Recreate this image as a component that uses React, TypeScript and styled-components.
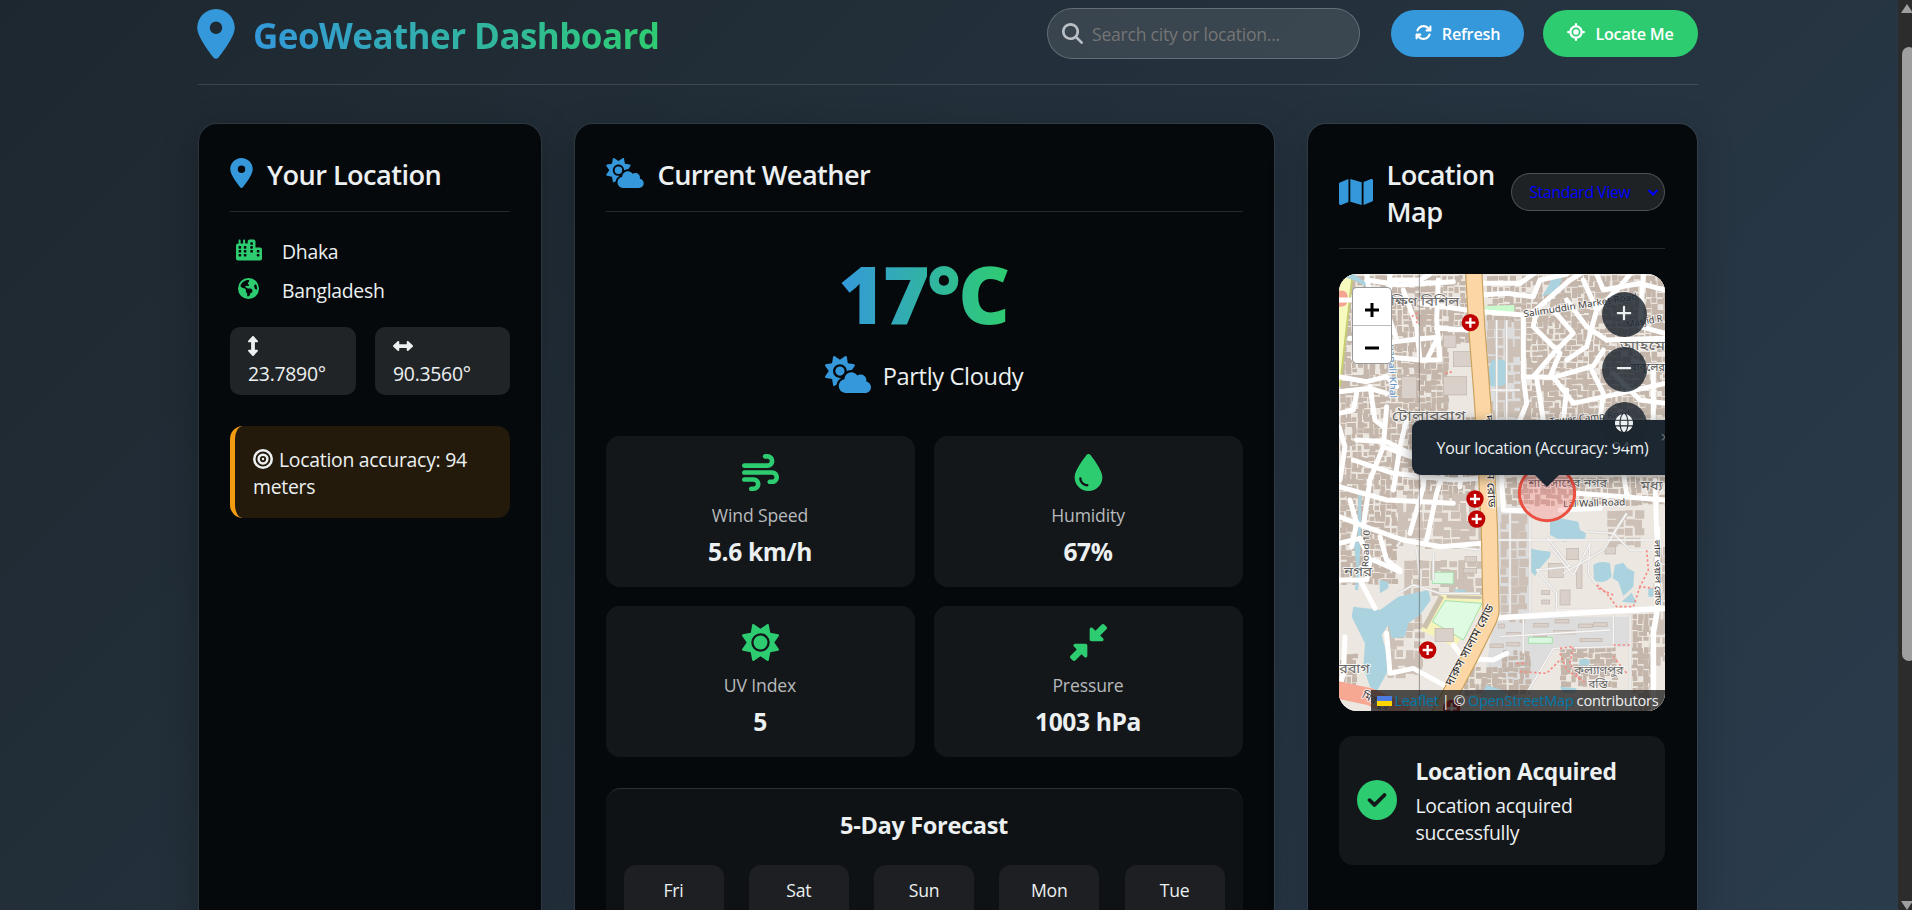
import React from "react";
import styled, { createGlobalStyle, css } from "styled-components";
import {
  FaLocationDot,
  FaMagnifyingGlass,
  FaArrowsRotate,
  FaLocationCrosshairs,
  FaCloudSun,
  FaMap,
  FaCity,
  FaEarthAmericas,
  FaUpDown,
  FaLeftRight,
  FaBullseye,
  FaWind,
  FaDroplet,
  FaSun,
  FaDownLeftAndUpRightToCenter,
  FaCircleCheck,
  FaPlus,
  FaMinus,
  FaGlobe,
} from "react-icons/fa6";

const BLUE = "#3498db";
const GREEN = "#2ecc71";
const LIGHT = "#ecf0f1";

const GlobalStyle = createGlobalStyle`
  * { box-sizing: border-box; letter-spacing: -0.014em; }
  html, body { margin: 0; padding: 0; overflow: hidden; }
  body {
    font-family: "Open Sans", "Noto Sans", sans-serif;
    font-size: 19.4px;
    line-height: 27px;
    color: ${LIGHT};
  }
  h1, h2, h3, p { margin: 0; }
  svg { display: block; flex: none; }
`;

const Screen = styled.div`
  display: flex;
  height: 910px;
  overflow: hidden;
`;

const Page = styled.div`
  flex: 1;
  min-width: 0;
  padding: 8px 200px 0 198px;
  background: linear-gradient(135deg, #1e272e, #2c3e50) 0 -44px / 1898px 1296px no-repeat;
`;

const Scrollbar = styled.div`
  width: 14px;
  flex: none;
  background: #2c2c2c;
  display: flex;
  flex-direction: column;
  padding: 4px 0 0 3px;
  overflow: hidden;
`;

const Arrow = styled.div<{ $down?: boolean }>`
  width: 0;
  height: 0;
  border: 6px solid transparent;
  ${(p) =>
    p.$down
      ? css`
          border-top: 9px solid #9f9f9f;
          border-bottom: 0;
        `
      : css`
          border-bottom: 9px solid #9f9f9f;
          border-top: 0;
        `}
`;

const Thumb = styled.div`
  width: 14px;
  height: 616px;
  margin: 34px 0 240px 1px;
  border-radius: 7px;
  background: #9f9f9f;
`;

const Header = styled.header`
  width: 1500px;
  height: 77px;
  display: flex;
  align-items: flex-start;
  justify-content: space-between;
  border-bottom: 1px solid rgba(255, 255, 255, 0.12);
`;

const Brand = styled.div`
  display: flex;
  align-items: center;
  height: 51px;
  gap: 18px;
  svg {
    color: ${BLUE};
    margin-left: -1px;
  }
`;

const gradientText = css`
  background: linear-gradient(90deg, ${BLUE}, ${GREEN});
  -webkit-background-clip: text;
  background-clip: text;
  color: transparent;
`;

const BrandTitle = styled.h1`
  font-size: 35px;
  line-height: 50px;
  font-weight: 700;
  padding-top: 5px;
  letter-spacing: -0.016em;
  ${gradientText}
`;

const Actions = styled.div`
  display: flex;
  align-items: center;
`;

const SearchBox = styled.label`
  width: 313px;
  height: 51px;
  margin-right: 31px;
  padding: 1px 14px 0;
  display: flex;
  align-items: center;
  gap: 9px;
  border: 1px solid rgba(255, 255, 255, 0.22);
  border-radius: 26px;
  background: rgba(255, 255, 255, 0.1);
  svg {
    color: #b9bfc4;
    margin-top: -2px;
  }
`;

const SearchInput = styled.input`
  flex: 1;
  min-width: 0;
  border: 0;
  padding: 1px 0 0;
  outline: 0;
  background: none;
  font: inherit;
  font-size: 17.6px;
  color: ${LIGHT};
  &::placeholder {
    color: #757575;
    opacity: 1;
  }
`;

const PillButton = styled.button<{ $color: string; $width: number }>`
  width: ${(p) => p.$width}px;
  height: 47px;
  margin-right: 19px;
  padding: 2px 0 0;
  display: flex;
  align-items: center;
  justify-content: center;
  gap: 10px;
  border: 0;
  border-radius: 24px;
  background: ${(p) => p.$color};
  color: #fff;
  font: inherit;
  font-size: 16.2px;
  font-weight: 600;
  &:last-child {
    margin-right: 0;
  }
  svg {
    margin-top: -5px;
  }
`;

const Columns = styled.main`
  display: grid;
  grid-template-columns: 343.5px 701px 391px;
  gap: 32px;
  padding-top: 38px;
`;

const Card = styled.section`
  height: 900px;
  padding: 31px;
  border: 1px solid rgba(255, 255, 255, 0.07);
  border-radius: 19px;
  background: #06090c padding-box;
  box-shadow: 0 10px 38px rgba(0, 0, 0, 0.22);
  &:last-child {
    padding-right: 32px;
  }
`;

const CardHeader = styled.div<{ $height?: number }>`
  display: flex;
  align-items: center;
  gap: 14px;
  height: ${(p) => p.$height ?? 57}px;
  padding-bottom: 20px;
  border-bottom: 1px solid rgba(255, 255, 255, 0.13);
  > svg {
    color: ${BLUE};
  }
`;

const CardTitle = styled.h2`
  font-size: 27.2px;
  line-height: 37px;
  font-weight: 600;
  letter-spacing: -0.021em;
  padding-top: 3px;
`;

const PlaceRow = styled.div`
  display: flex;
  align-items: center;
  height: 27px;
  margin-bottom: 12px;
`;

const PlaceIcon = styled.span`
  width: 37px;
  margin: -4px 15px 0 0;
  display: flex;
  justify-content: center;
  color: ${GREEN};
`;

const Places = styled.div`
  padding-top: 26px;
`;

const Coords = styled.div`
  display: grid;
  grid-template-columns: 126px 135px;
  gap: 19px;
  margin-top: 23px;
`;

const Coord = styled.div`
  height: 68px;
  padding: 7px 18px;
  border-radius: 10px;
  background: rgba(255, 255, 255, 0.11);
  svg {
    margin: 2px 0 4px;
  }
`;

const Accuracy = styled.div`
  margin-top: 31px;
  height: 92px;
  padding: 20px 18px;
  border-left: 5px solid #f39c12;
  border-radius: 13px;
  background: rgba(243, 156, 18, 0.12);
  svg {
    display: inline-block;
    vertical-align: -2px;
    margin-right: 6px;
  }
`;

const Current = styled.div`
  display: flex;
  flex-direction: column;
  align-items: center;
  padding-top: 33px;
`;

const Temperature = styled.div`
  font-size: 80px;
  line-height: 96px;
  font-weight: 800;
  letter-spacing: -0.031em;
  margin-left: -2px;
  ${gradientText}
`;

const Condition = styled.div`
  display: flex;
  align-items: center;
  gap: 12px;
  margin-top: 14px;
  height: 42px;
  font-size: 23.6px;
  svg {
    color: ${BLUE};
    margin-top: -4px;
  }
`;

const Metrics = styled.div`
  display: grid;
  grid-template-columns: 1fr 1fr;
  gap: 19px;
  margin-top: 39px;
`;

const Metric = styled.div`
  height: 151px;
  padding-top: 18px;
  border-radius: 14px;
  background: rgba(255, 255, 255, 0.06);
  display: flex;
  flex-direction: column;
  align-items: center;
  svg {
    color: ${GREEN};
  }
`;

const MetricLabel = styled.div`
  margin-top: 12px;
  font-size: 17.6px;
  line-height: 25px;
  letter-spacing: -0.008em;
  color: #b7babc;
`;

const MetricValue = styled.div`
  margin-top: 7px;
  font-size: 24.6px;
  line-height: 34px;
  font-weight: 700;
  letter-spacing: -0.016em;
`;

const Forecast = styled.div`
  margin-top: 31px;
  height: 240px;
  padding: 17px 18px 0;
  border-top: 1px solid rgba(255, 255, 255, 0.13);
  border-radius: 15px;
  background: rgba(255, 255, 255, 0.04);
`;

const ForecastTitle = styled.h3`
  font-size: 23.6px;
  line-height: 38px;
  font-weight: 700;
  text-align: center;
  letter-spacing: -0.015em;
`;

const Days = styled.div`
  display: grid;
  grid-template-columns: repeat(5, 100px);
  justify-content: space-between;
  margin-top: 21px;
`;

const Day = styled.div`
  height: 150px;
  padding-top: 13px;
  border-radius: 12px;
  background: rgba(255, 255, 255, 0.06);
  font-size: 17.6px;
  line-height: 25px;
  text-align: center;
`;

const ViewSelect = styled.div`
  flex: none;
  width: 154px;
  height: 38px;
  margin-left: auto;
  padding: 1px 5px 0 18px;
  display: flex;
  align-items: center;
  justify-content: space-between;
  border: 1px solid rgba(255, 255, 255, 0.22);
  border-radius: 19px;
  background: rgba(255, 255, 255, 0.1);
  color: #0000ff;
  font-size: 15.8px;
  letter-spacing: -0.025em;
  white-space: nowrap;
`;

const MapFrame = styled.div`
  position: relative;
  width: 326px;
  height: 437px;
  margin-top: 25px;
  border-radius: 18px;
  overflow: hidden;
  background: #f2efe9;
`;

const ZoomControl = styled.div`
  position: absolute;
  left: 13px;
  top: 13px;
  width: 40px;
  border: 1px solid rgba(0, 0, 0, 0.4);
  border-radius: 5px;
  overflow: hidden;
  background: #fff;
  color: #000;
`;

const ZoomKey = styled.div`
  height: 37.5px;
  display: flex;
  align-items: center;
  justify-content: center;
  padding: 7px 0 0 1px;
  &:first-child {
    border-bottom: 1px solid #bbb;
  }
`;

const RoundControls = styled.div`
  position: absolute;
  left: 263px;
  top: 18px;
  display: flex;
  flex-direction: column;
  gap: 10px;
`;

const RoundButton = styled.div`
  width: 45px;
  height: 45px;
  border-radius: 50%;
  display: flex;
  align-items: center;
  justify-content: center;
  padding: 0 1px 3px 0;
  background: rgba(28, 38, 47, 0.82);
  color: ${LIGHT};
`;

const Popup = styled.div`
  position: absolute;
  left: 73px;
  top: 146px;
  width: 270px;
  height: 55px;
  padding: 2px 0 0 25px;
  display: flex;
  align-items: center;
  border-radius: 9px;
  background: #1c2731;
  font-size: 15.9px;
  white-space: nowrap;
  box-shadow: 0 3px 14px rgba(0, 0, 0, 0.4);
`;

const PopupTip = styled.div`
  position: absolute;
  left: 195px;
  top: 200px;
  border: 13px solid transparent;
  border-top-color: #1c2731;
  border-bottom: 0;
`;

const PopupClose = styled.span`
  position: absolute;
  left: 249px;
  top: 4px;
  font-size: 16px;
  color: #757575;
`;

const Attribution = styled.div`
  position: absolute;
  right: 0;
  bottom: 0;
  width: 294px;
  height: 21px;
  padding: 0 6px 0 6px;
  display: flex;
  align-items: center;
  justify-content: space-between;
  background: rgba(28, 28, 28, 0.76);
  font-size: 14.6px;
  line-height: 21px;
  white-space: nowrap;
  a {
    color: #0078a8;
  }
`;

const Status = styled.div`
  margin-top: 25px;
  height: 129px;
  padding: 0 18px;
  display: flex;
  align-items: center;
  gap: 19px;
  border-radius: 14px;
  background: rgba(255, 255, 255, 0.06);
  svg {
    color: ${GREEN};
    margin-top: -2px;
  }
`;

const StatusTitle = styled.h3`
  font-size: 22.8px;
  line-height: 31px;
  font-weight: 700;
  letter-spacing: -0.014em;
  margin: 0 0 5px;
`;

/* ---- street map drawing ---- */

type Area = [number, number, number, number];

// Small footprints scattered over the densely built blocks, from a fixed seed.
function footprints(areas: Area[], step: number) {
  let seed = 7;
  const rnd = () => {
    seed = (seed * 16807) % 2147483647;
    return seed / 2147483647;
  };
  let d = "";
  areas.forEach(([x0, y0, x1, y1]) => {
    for (let y = y0; y < y1; y += step) {
      for (let x = x0; x < x1; x += step) {
        if (rnd() < 0.06) continue;
        const w = Math.round(step * (0.65 + rnd() * 0.5));
        const h = Math.round(step * (0.65 + rnd() * 0.5));
        d += `M${Math.round(x + rnd() * 4)} ${Math.round(y + rnd() * 4)}h${w}v${h}h${-w}z`;
      }
    }
  });
  return d;
}

const dense = footprints(
  [
    [60, 45, 450, 240],
    [60, 240, 370, 470],
    [60, 470, 465, 700],
    [500, 45, 1035, 170],
    [600, 170, 1035, 480],
    [540, 650, 1035, 720],
    [60, 700, 230, 960],
    [545, 1170, 630, 1290],
    [935, 1060, 1000, 1350],
    [430, 1220, 540, 1290],
    [60, 1180, 110, 1290],
    [720, 1160, 880, 1270],
  ],
  17
);
const sparse = footprints(
  [
    [230, 700, 480, 850],
    [250, 900, 480, 985],
    [540, 760, 620, 1060],
    [200, 1060, 290, 1230],
    [500, 180, 600, 480],
    [1000, 860, 1035, 1200],
    [860, 750, 960, 850],
  ],
  27
);

const wideRoads = [
  "M57 120H200L215 60H300L330 42",
  "M140 60L240 75L400 65",
  "M140 42L150 110",
  "M210 42L200 150L230 240",
  "M250 90L290 200L300 300",
  "M355 60L350 180L360 300L300 300L200 290L100 295",
  "M300 130L440 150",
  "M90 235L220 245L350 232",
  "M350 205L450 210",
  "M320 300L355 230",
  "M57 350L140 365L200 350L230 380",
  "M57 395L150 385L200 400",
  "M150 380L165 480L190 500",
  "M57 460L100 450L110 400",
  "M57 500L75 560L60 660",
  "M110 540L200 545L290 590",
  "M200 440L190 560L150 660L130 800",
  "M190 560L300 600L420 610L490 600",
  "M260 480L240 560L220 690",
  "M300 480L320 560L310 680L270 820",
  "M370 480L380 600L350 700L320 840",
  "M430 480L420 680",
  "M100 600L220 640L400 660L480 655",
  "M57 770L150 805L250 840L360 860L485 850",
  "M57 680L200 720L400 730",
  "M90 720L110 790L95 860",
  "M57 850L120 835L150 900L140 960L57 960",
  "M180 830L200 900L240 930",
  "M120 960L165 1045",
  "M160 900L240 935",
  "M75 1130L70 1240L57 1290",
  "M200 1120L210 1240L280 1225L380 1280",
  "M400 1155L430 1195L520 1200L560 1180",
  "M490 155L610 165",
  "M485 70L600 70L640 42",
  "M485 105L560 100L640 110L660 60L740 42",
  "M610 165L610 350L700 352L820 318L850 270",
  "M635 160L750 60L780 42",
  "M650 150L640 200L720 280L690 350",
  "M700 150L760 220L700 280L640 350",
  "M740 120L800 200L860 240",
  "M790 60L830 150L900 80L930 42",
  "M830 150L800 260L740 300",
  "M830 42L850 90L960 70L1035 90",
  "M970 42L960 200L1035 220",
  "M860 240L1035 235",
  "M610 350L620 430L600 480",
  "M650 355L670 480",
  "M700 352L760 430L900 400L1035 370",
  "M740 390L730 480",
  "M810 320L850 400L840 480",
  "M880 340L960 420L1035 430",
  "M940 300L1000 330L1000 480",
  "M545 650L550 750L620 752",
  "M770 700L840 705L1035 720",
  "M910 640L920 700",
  "M1005 660L1010 820",
  "M720 750L840 745",
];

const thinRoads = [
  "M530 840H1000",
  "M570 750V1060",
  "M630 760V1060",
  "M680 830L750 920L650 930L710 1000V1050",
  "M690 860L760 945L810 850",
  "M800 815L880 820L920 760",
  "M880 820L930 870H1000",
  "M920 760L850 870L730 940",
  "M810 850L805 940L850 1000",
  "M710 1050H1000",
  "M610 1070V1180",
  "M880 1060V1160L700 1165L620 1300",
  "M930 1060V1350",
  "M540 1130L870 1110",
  "M230 860L245 840L480 870",
  "M235 1000L280 975L360 1000L480 1000",
  "M340 880V960",
  "M290 870L300 960",
  "M530 180V480",
  "M560 180V480",
  "M500 390H600",
];

const waterways = [
  "M57 45L100 42L150 75L140 80L105 62z",
  "M700 42L725 42Q728 70 705 95L665 110Q690 75 700 42z",
  "M515 302Q540 292 560 305L564 370Q540 385 512 378L506 330z",
  "M690 780L720 775L775 785L780 810L798 820L795 838L730 845L690 825z",
  "M630 865L650 870L692 875L690 890L655 930L645 948L628 930z",
  "M820 915Q840 900 870 910L875 950Q850 975 822 960z",
  "M885 915L910 908L922 925L943 935L940 980L910 1008L895 965L878 955z",
  "M905 1025L935 998L950 1030z",
  "M985 985L1000 985V1010L985 1010z",
  "M100 1040L180 1050L235 1010L280 1000L325 990L332 1020L300 1065L265 1090L255 1130L215 1135L205 1095L185 1125L205 1200L200 1240L170 1295L150 1280L130 1220L135 1150L95 1070z",
  "M178 960L205 965L205 985L180 1000z",
  "M395 988L440 990L425 1003z",
  "M500 1275L560 1295L550 1320L480 1310z",
  "M720 1280L770 1285L765 1300L730 1300z",
  "M778 1198h30v18h-30z",
];

const trackDots = [
  "M980 870L985 930L960 980L1000 985",
  "M830 975L860 1000L890 1040L940 1040L960 980",
  "M835 985L880 1005",
  "M720 1165L760 1160L750 1210L780 1260",
  "M720 1180L740 1230L800 1270",
  "M600 1235L680 1240L720 1200",
  "M590 1210H620",
  "M880 1155H930",
  "M880 1190L920 1240",
  "M275 170L290 160L290 190",
  "M375 340L400 335",
];

const hospitals: [number, number][] = [
  [451, 188],
  [465, 717],
  [470, 777],
  [323, 1170],
  [395, 1345],
];

const blocks: Area[] = [
  [245, 350, 45, 65],
  [370, 225, 38, 38],
  [400, 275, 55, 45],
  [370, 350, 70, 55],
  [740, 865, 36, 34],
  [685, 910, 45, 42],
  [855, 860, 32, 22],
  [720, 990, 30, 45],
  [770, 915, 16, 70],
  [665, 992, 24, 12],
  [665, 1020, 24, 12],
  [535, 1092, 18, 12],
  [345, 1105, 55, 40],
];

const bars: Area[] = [
  [640, 1090, 45, 11],
  [705, 1078, 42, 11],
  [775, 1092, 42, 11],
  [820, 1088, 42, 11],
  [560, 1118, 42, 10],
  [640, 1120, 40, 10],
  [700, 1112, 66, 10],
  [780, 1135, 66, 10],
  [510, 1152, 40, 10],
  [560, 1148, 40, 10],
  [435, 890, 35, 16],
  [430, 925, 40, 14],
];

const LabelText = styled.text<{ $tone?: string }>`
  fill: ${(p) => p.$tone ?? "#6a6a68"};
  font-family: "Noto Sans Bengali", "Noto Sans", "Open Sans", sans-serif;
  letter-spacing: 0;
  stroke: rgba(255, 255, 255, 0.75);
  stroke-width: 6px;
  stroke-linejoin: round;
  paint-order: stroke;
`;

type LabelProps = React.SVGProps<SVGTextElement> & { $tone?: string };

function MapLabel({ ref: _ref, ...props }: LabelProps) {
  return <LabelText lengthAdjust="spacingAndGlyphs" {...props} />;
}

const mainRoad = "M461 30L470 200L488 430L500 640L508 800L513 1050Q512 1070 500 1090L445 1200L350 1380";

function StreetMap() {
  return (
    <svg width="326" height="437" viewBox="57 42 978 1311">
      <rect x="57" y="42" width="978" height="1311" fill="#ece7e0" />
      <path d="M490 170H605V480H500zM530 740H630V1070H525zM520 1070H930V1160H700L620 1300L500 1220z" fill="#dedddd" />
      <path d={dense} fill="#c4b6ab" />
      <path d={sparse} fill="#cdc1b7" />
      <path d="M57 42H98L60 380H57z" fill="#f6fabe" />
      <path d="M98 42L60 380" stroke="#c5cc72" strokeWidth="6" fill="none" />
      <path d="M57 92Q84 88 84 116Q84 142 57 140z" fill="#f5a493" />
      <path d="M495 138L583 135V160L495 152z" fill="#c8facc" />
      {waterways.map((d) => (
        <path key={d} d={d} fill="#aad3df" />
      ))}
      <path d="M120 690L118 830L110 990M105 840L118 960" stroke="#aad3df" strokeWidth="9" fill="none" />
      <g fill="#dcf7e0" stroke="#a5dfae" strokeWidth="3">
        <path d="M337 937H400V972L337 970z" />
        <path d="M625 1132H697V1150H625z" />
      </g>
      <path d="M362 998L488 1005V1040L405 1162L302 1110z" fill="#f7f4bb" />
      <path d="M375 1022L486 1030L430 1140L337 1085z" fill="#dffbe2" stroke="#a5dfae" strokeWidth="3" />
      <path d="M358 1005L372 1012L320 1108L306 1100zM380 1005L485 1008V1018L380 1015z" fill="#cbbfae" />
      <g fill="#d9d0c9" stroke="#c2b5aa" strokeWidth="2">
        {blocks.concat(bars).map(([x, y, w, h]) => (
          <rect key={`${x}-${y}`} x={x} y={y} width={w} height={h} />
        ))}
      </g>
      <g fill="none" stroke="#d5d3d1" strokeWidth="8" strokeLinejoin="round">
        {thinRoads.map((d) => (
          <path key={d} d={d} />
        ))}
      </g>
      <g fill="none" stroke="#f7f6f5" strokeWidth="4" strokeLinejoin="round">
        {thinRoads.map((d) => (
          <path key={d} d={d} />
        ))}
      </g>
      <g fill="none" stroke="#fff" strokeWidth="15" strokeLinejoin="round" strokeLinecap="round">
        {wideRoads.map((d) => (
          <path key={d} d={d} />
        ))}
      </g>
      <path
        d="M525 1074L830 1056L1035 1045M1012 800V1050L1000 1120V1350"
        fill="none"
        stroke="#fff"
        strokeWidth="17"
      />
      <path d="M45 1288L150 1310L260 1362" fill="none" stroke="#f6a893" strokeWidth="52" />
      <g fill="none" stroke="#f58b84" strokeWidth="5" strokeDasharray="7 7">
        {trackDots.map((d) => (
          <path key={d} d={d} />
        ))}
      </g>
      <path d={mainRoad} fill="none" stroke="#c9a25f" strokeWidth="52" />
      <path d={mainRoad} fill="none" stroke="#fcd6a4" strokeWidth="45" />
      <path d="M298 42V1353" stroke="#55504c" strokeOpacity=".55" strokeWidth="3" />
      {hospitals.map(([x, y]) => (
        <g key={y}>
          <circle cx={x} cy={y} r="26" fill="#bf0000" />
          <path d={`M${x - 15} ${y}h30M${x} ${y - 15}v30`} stroke="#fff" strokeWidth="7" />
        </g>
      ))}
      <MapLabel x="212" y="138" fontSize="40" textLength="206">ক্ষিণ বিশিল</MapLabel>
      <MapLabel x="215" y="484" fontSize="44" textLength="222">টোলারবাগ</MapLabel>
      <MapLabel x="900" y="270" fontSize="40" textLength="135">আহমে</MapLabel>
      <MapLabel x="930" y="333" fontSize="32" textLength="105" $tone="#555">বাবুলের</MapLabel>
      <MapLabel x="625" y="682" fontSize="34" textLength="236" $tone="#666">শাহ সাহেব নগর</MapLabel>
      <MapLabel x="962" y="690" fontSize="38" textLength="66">মধ্য</MapLabel>
      <MapLabel x="72" y="948" fontSize="38" textLength="84">নগর</MapLabel>
      <MapLabel x="57" y="1238" fontSize="38" textLength="92">রবাগ</MapLabel>
      <MapLabel x="762" y="1242" fontSize="34" textLength="148">কল্যাণপুর</MapLabel>
      <MapLabel x="805" y="1284" fontSize="34" textLength="58">বস্তি</MapLabel>
      <MapLabel transform="translate(396 1280) rotate(-62)" fontSize="36" textLength="270" $tone="#333">
        দারুস সালাম রোড
      </MapLabel>
      <MapLabel transform="translate(495 465) rotate(88)" fontSize="32" textLength="278" $tone="#333">
        দারুস সালাম রোড
      </MapLabel>
      <MapLabel transform="translate(1002 840) rotate(89)" fontSize="26" textLength="196" $tone="#333">
        লাল ওয়াল রোড
      </MapLabel>
      <MapLabel transform="translate(124 1312) rotate(28)" fontSize="32" textLength="86" $tone="#444">
        মিরপুর
      </MapLabel>
      <MapLabel transform="translate(612 172) rotate(-9)" fontSize="28" textLength="345" $tone="#444">
        Salimuddin Market Road
      </MapLabel>
      <MapLabel transform="translate(920 203) rotate(-10)" fontSize="28" $tone="#444">Masjid R</MapLabel>
      <MapLabel transform="translate(690 494) rotate(-6)" fontSize="28" textLength="242" $tone="#444">
        Tower Camp Road
      </MapLabel>
      <MapLabel transform="translate(730 742) rotate(-2)" fontSize="28" textLength="186" $tone="#444">
        Lal Wall Road
      </MapLabel>
      <MapLabel transform="translate(145 922) rotate(-88)" fontSize="26" textLength="112" $tone="#444">
        Road 10
      </MapLabel>
      <MapLabel transform="translate(205 255) rotate(88)" fontSize="28" textLength="160" $tone="#5a8fc4">
        yanali Khal
      </MapLabel>
      <circle cx="681" cy="699" r="83" fill="rgba(255,90,90,.25)" stroke="#ea4f40" strokeWidth="9" />
    </svg>
  );
}

const Flag = styled.span`
  width: 15px;
  height: 10px;
  background: linear-gradient(#4c7be1 50%, #ffd500 50%);
`;

const PinLarge = styled(FaLocationDot)`
  width: 38px;
  height: 50px;
`;

const PinSmall = styled(FaLocationDot)`
  width: 23px;
  height: 30px;
`;

const SunCloud = styled(FaCloudSun)<{ $w: number; $h: number }>`
  width: ${(p) => p.$w}px;
  height: ${(p) => p.$h}px;
`;

const metrics = [
  { icon: <FaWind size={37} />, label: "Wind Speed", value: "5.6 km/h" },
  { icon: <FaDroplet size={37} />, label: "Humidity", value: "67%" },
  { icon: <FaSun size={37} />, label: "UV Index", value: "5" },
  { icon: <FaDownLeftAndUpRightToCenter size={37} />, label: "Pressure", value: "1003 hPa" },
];

export default function App() {
  return (
    <>
      <GlobalStyle />
      <Screen>
        <Page>
          <Header>
            <Brand>
              <PinLarge />
              <BrandTitle>GeoWeather Dashboard</BrandTitle>
            </Brand>
            <Actions>
              <SearchBox>
                <FaMagnifyingGlass size={21} />
                <SearchInput placeholder="Search city or location..." />
              </SearchBox>
              <PillButton $color={BLUE} $width={133}>
                <FaArrowsRotate size={17} />
                Refresh
              </PillButton>
              <PillButton $color={GREEN} $width={155}>
                <FaLocationCrosshairs size={18} />
                Locate Me
              </PillButton>
            </Actions>
          </Header>
          <Columns>
            <Card>
              <CardHeader>
                <PinSmall />
                <CardTitle>Your Location</CardTitle>
              </CardHeader>
              <Places>
                <PlaceRow>
                  <PlaceIcon>
                    <FaCity size={26} viewBox="0 0 640 512" />
                  </PlaceIcon>
                  Dhaka
                </PlaceRow>
                <PlaceRow>
                  <PlaceIcon>
                    <FaEarthAmericas size={21} />
                  </PlaceIcon>
                  Bangladesh
                </PlaceRow>
              </Places>
              <Coords>
                <Coord>
                  <FaUpDown size={20} preserveAspectRatio="xMinYMid meet" />
                  23.7890°
                </Coord>
                <Coord>
                  <FaLeftRight size={20} />
                  90.3560°
                </Coord>
              </Coords>
              <Accuracy>
                <FaBullseye size={20} />
                Location accuracy: 94 meters
              </Accuracy>
            </Card>

            <Card>
              <CardHeader>
                <SunCloud $w={38} $h={30} />
                <CardTitle>Current Weather</CardTitle>
              </CardHeader>
              <Current>
                <Temperature>17°C</Temperature>
                <Condition>
                  <SunCloud $w={46} $h={37} />
                  Partly Cloudy
                </Condition>
              </Current>
              <Metrics>
                {metrics.map((m) => (
                  <Metric key={m.label}>
                    {m.icon}
                    <MetricLabel>{m.label}</MetricLabel>
                    <MetricValue>{m.value}</MetricValue>
                  </Metric>
                ))}
              </Metrics>
              <Forecast>
                <ForecastTitle>5-Day Forecast</ForecastTitle>
                <Days>
                  {["Fri", "Sat", "Sun", "Mon", "Tue"].map((d) => (
                    <Day key={d}>{d}</Day>
                  ))}
                </Days>
              </Forecast>
            </Card>

            <Card>
              <CardHeader $height={94}>
                <FaMap size={34} viewBox="0 0 576 512" />
                <CardTitle>
                  Location
                  <br />
                  Map
                </CardTitle>
                <ViewSelect>
                  Standard View
                  <svg width="12" height="12" viewBox="0 0 12 12">
                    <path d="M1.5 4L6 8.5L10.5 4" fill="none" stroke="currentColor" strokeWidth="2.2" />
                  </svg>
                </ViewSelect>
              </CardHeader>
              <MapFrame>
                <StreetMap />
                <Popup>
                  Your location (Accuracy: 94m)
                  <PopupClose>×</PopupClose>
                </Popup>
                <PopupTip />
                <ZoomControl>
                  <ZoomKey>
                    <svg width="14" height="14" viewBox="0 0 14 14">
                      <path d="M0 7H14M7 0V14" stroke="#000" strokeWidth="3" />
                    </svg>
                  </ZoomKey>
                  <ZoomKey>
                    <svg width="14" height="14" viewBox="0 0 14 14">
                      <path d="M0 7H14" stroke="#000" strokeWidth="3" />
                    </svg>
                  </ZoomKey>
                </ZoomControl>
                <RoundControls>
                  <RoundButton>
                    <FaPlus size={18} />
                  </RoundButton>
                  <RoundButton>
                    <FaMinus size={18} />
                  </RoundButton>
                  <RoundButton>
                    <FaGlobe size={18} />
                  </RoundButton>
                </RoundControls>
                <Attribution>
                  <Flag />
                  <a>Leaflet</a>
                  <span>| ©</span>
                  <a>OpenStreetMap</a>
                  <span>contributors</span>
                </Attribution>
              </MapFrame>
              <Status>
                <FaCircleCheck size={40} />
                <div>
                  <StatusTitle>Location Acquired</StatusTitle>
                  <p>
                    Location acquired
                    <br />
                    successfully
                  </p>
                </div>
              </Status>
            </Card>
          </Columns>
        </Page>
        <Scrollbar>
          <Arrow />
          <Thumb />
          <Arrow $down />
        </Scrollbar>
      </Screen>
    </>
  );
}
